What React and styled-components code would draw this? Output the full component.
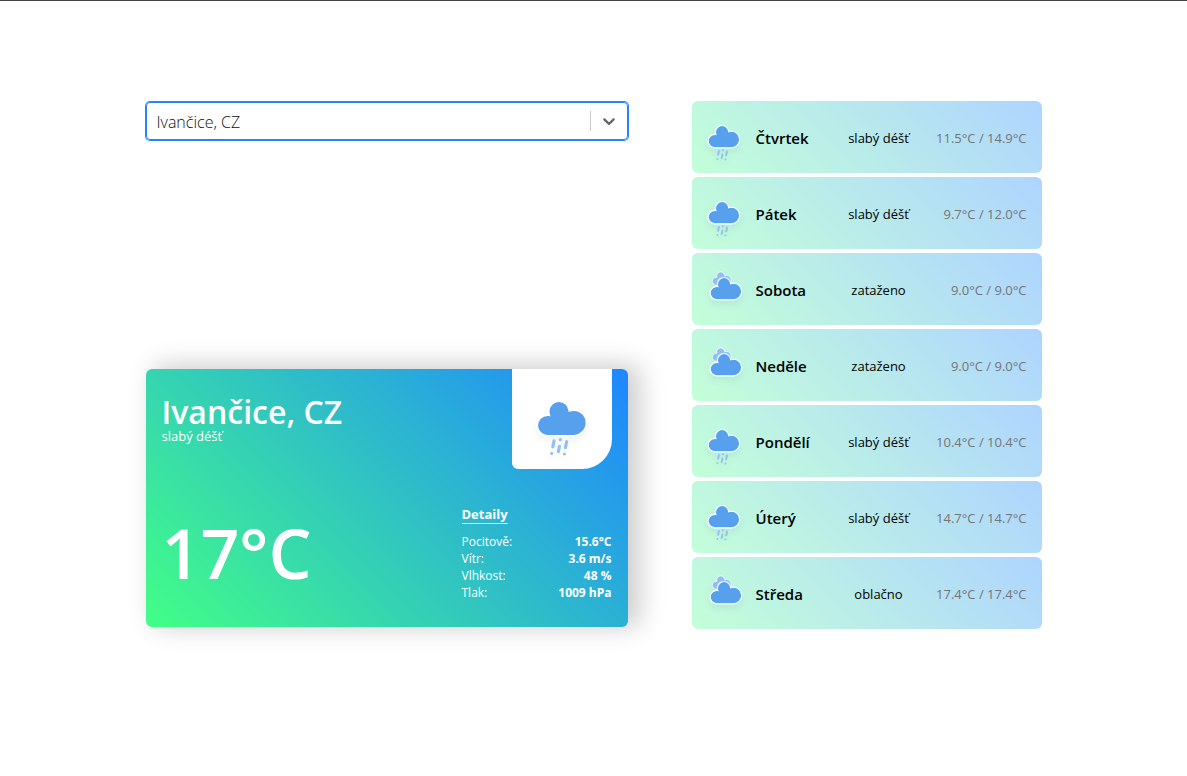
import React from "react";
import styled, { createGlobalStyle } from "styled-components";

const GlobalStyle = createGlobalStyle`
  * { box-sizing: border-box; }
  body {
    margin: 0;
    background: #fff;
    color: #000;
    font-family: "Segoe UI", "Open Sans", "Noto Sans", sans-serif;
    font-size: 14px;
  }
`;

const Page = styled.div`
  border-top: 1px solid #444;
  padding: 100px 24px;
`;

const Layout = styled.main`
  display: grid;
  grid-template-columns: minmax(0, 1fr) 350px;
  column-gap: 64px;
  max-width: 896px;
  margin: 0 auto;
`;

const LeftColumn = styled.div`
  display: flex;
  flex-direction: column;
  justify-content: space-between;
  padding: 1px 0 2px;
`;

const SelectBox = styled.div`
  display: grid;
  grid-template-columns: 1fr 37px;
  align-items: center;
  height: 38px;
  border: 1px solid #2684ff;
  border-radius: 4px;
  box-shadow: 0 0 0 1px #2684ff;
`;

const CitySelect = styled.select`
  grid-area: 1 / 1 / 2 / 3;
  width: 100%;
  height: 36px;
  padding: 2px 48px 0 10px;
  border: 0;
  outline: 0;
  appearance: none;
  background: transparent;
  color: #111;
  font-family: inherit;
  font-size: 16px;
  font-weight: 300;
`;

const SelectIndicator = styled.span`
  grid-area: 1 / 2;
  display: flex;
  align-items: center;
  height: 20px;
  padding-left: 8px;
  border-left: 1px solid #ccc;
  color: #666;
  pointer-events: none;
`;

const CurrentCard = styled.section`
  display: flex;
  flex-direction: column;
  justify-content: space-between;
  height: 258px;
  padding: 0 16px 26px;
  border-radius: 6px;
  background: linear-gradient(45deg, #42ff86, #1e86ff);
  box-shadow: 10px -2px 26px 2px rgba(0, 0, 0, 0.2);
  color: #fff;
`;

const CardRow = styled.div`
  display: flex;
  justify-content: space-between;
  align-items: ${(p) => p.$align};
`;

const City = styled.h1`
  margin: 26px 0 0;
  font-size: 32px;
  line-height: 34px;
  font-weight: 600;
`;

const Description = styled.p`
  margin: 0;
  font-size: 13px;
  line-height: 14px;
`;

const IconTile = styled.div`
  width: 100px;
  height: 100px;
  border-radius: 0 0 30px 6px;
  background: #fff;
`;

const Temperature = styled.p`
  margin: 0;
  font-size: 68px;
  line-height: 96px;
  font-weight: 600;
`;

const Details = styled.div`
  width: 150px;
`;

const DetailsTitle = styled.h2`
  width: max-content;
  margin: 0 0 9px;
  border-bottom: 1px solid #fff;
  font-size: 13px;
  line-height: 18px;
  font-weight: 700;
`;

const DetailRow = styled.dl`
  display: flex;
  justify-content: space-between;
  margin: 0;
  font-size: 12px;
  line-height: 17px;

  dd {
    margin: 0;
    font-weight: 700;
  }
`;

const Forecast = styled.ul`
  display: grid;
  gap: 4px;
  margin: 0;
  padding: 0;
  list-style: none;
`;

const DayRow = styled.li`
  display: grid;
  grid-template-columns: 64px 76px 94px 1fr;
  align-items: center;
  height: 72px;
  padding-right: 15px;
  border-radius: 6px;
  background: linear-gradient(45deg, #c3ffd8, #aed4ff);
`;

const RowText = styled.span`
  padding-top: 2px;
  font-size: 13px;
  line-height: 20px;
`;

const DayName = styled(RowText)`
  font-size: 15px;
  font-weight: 600;
`;

const DayText = styled(RowText)`
  text-align: center;
`;

const DayTemps = styled(RowText)`
  color: #757575;
  text-align: right;
`;

const Icon = styled.svg`
  display: block;
  overflow: visible;
  filter: drop-shadow(0 4px 3px rgba(0, 0, 0, 0.05));
`;

const CLOUD =
  "M47.7,35.4c0-4.6-3.7-8.2-8.2-8.2c-1,0-1.9,0.2-2.8,0.5c-0.3-3.4-3.1-6.2-6.6-6.2c-3.7,0-6.7,3-6.7,6.7c0,0.8,0.2,1.6,0.4,2.3c-0.3-0.1-0.7-0.1-1-0.1c-3.7,0-6.7,3-6.7,6.7c0,3.6,2.9,6.6,6.5,6.7l17.2,0C44.2,43.3,47.7,39.8,47.7,35.4z";

const RAIN =
  "M26.9,46L26.1,49.8M25.4,54v0.01M30.9,45.2v0.01M30.4,49.5L29.7,52.9M35,46.5L34.2,50.3M33.5,54.4v0.01";

function WeatherIcon({ kind, size }) {
  return (
    <Icon viewBox="0 0 64 64" width={size} height={size} aria-hidden="true">
      {kind === "rain" ? (
        <>
          <path d={CLOUD} transform="translate(0 -1)" fill="#57a0ee" stroke="#fff" strokeWidth="1.2" />
          <path d={RAIN} fill="none" stroke="#91c0f8" strokeWidth="2" strokeLinecap="round" />
        </>
      ) : (
        <>
          <path d={CLOUD} transform="translate(10.6 2) scale(0.6)" fill="#91c0f8" stroke="#fff" strokeWidth="1.2" />
          <path d={CLOUD} transform="translate(2 -1)" fill="#57a0ee" stroke="#fff" strokeWidth="1.2" />
        </>
      )}
    </Icon>
  );
}

const DETAILS = [
  ["Pocitově:", "15.6°C"],
  ["Vítr:", "3.6 m/s"],
  ["Vlhkost:", "48 %"],
  ["Tlak:", "1009 hPa"],
];

const DAYS = [
  ["Čtvrtek", "rain", "slabý déšť", "11.5°C / 14.9°C"],
  ["Pátek", "rain", "slabý déšť", "9.7°C / 12.0°C"],
  ["Sobota", "cloud", "zataženo", "9.0°C / 9.0°C"],
  ["Neděle", "cloud", "zataženo", "9.0°C / 9.0°C"],
  ["Pondělí", "rain", "slabý déšť", "10.4°C / 10.4°C"],
  ["Úterý", "rain", "slabý déšť", "14.7°C / 14.7°C"],
  ["Středa", "cloud", "oblačno", "17.4°C / 17.4°C"],
];

export default function App() {
  return (
    <Page>
      <GlobalStyle />
      <Layout>
        <LeftColumn>
          <SelectBox>
            <CitySelect aria-label="Město" defaultValue="ivancice">
              <option value="ivancice">Ivančice, CZ</option>
            </CitySelect>
            <SelectIndicator>
              <svg width="20" height="20" viewBox="0 0 20 20" fill="currentColor" aria-hidden="true">
                <path d="M4.516 7.548c0.436-0.446 1.043-0.481 1.576 0l3.908 3.747 3.908-3.747c0.533-0.481 1.141-0.446 1.574 0 0.436 0.445 0.408 1.197 0 1.615-0.406 0.418-4.695 4.502-4.695 4.502-0.217 0.223-0.502 0.335-0.787 0.335s-0.57-0.112-0.789-0.335c0 0-4.287-4.084-4.695-4.502s-0.436-1.17 0-1.615z" />
              </svg>
            </SelectIndicator>
          </SelectBox>
          <CurrentCard>
            <CardRow $align="flex-start">
              <div>
                <City>Ivančice, CZ</City>
                <Description>slabý déšť</Description>
              </div>
              <IconTile>
                <WeatherIcon kind="rain" size={100} />
              </IconTile>
            </CardRow>
            <CardRow $align="flex-end">
              <Temperature>17°C</Temperature>
              <Details>
                <DetailsTitle>Detaily</DetailsTitle>
                {DETAILS.map(([label, value]) => (
                  <DetailRow key={label}>
                    <dt>{label}</dt>
                    <dd>{value}</dd>
                  </DetailRow>
                ))}
              </Details>
            </CardRow>
          </CurrentCard>
        </LeftColumn>
        <Forecast>
          {DAYS.map(([day, kind, text, temps]) => (
            <DayRow key={day}>
              <WeatherIcon kind={kind} size={64} />
              <DayName>{day}</DayName>
              <DayText>{text}</DayText>
              <DayTemps>{temps}</DayTemps>
            </DayRow>
          ))}
        </Forecast>
      </Layout>
    </Page>
  );
}
